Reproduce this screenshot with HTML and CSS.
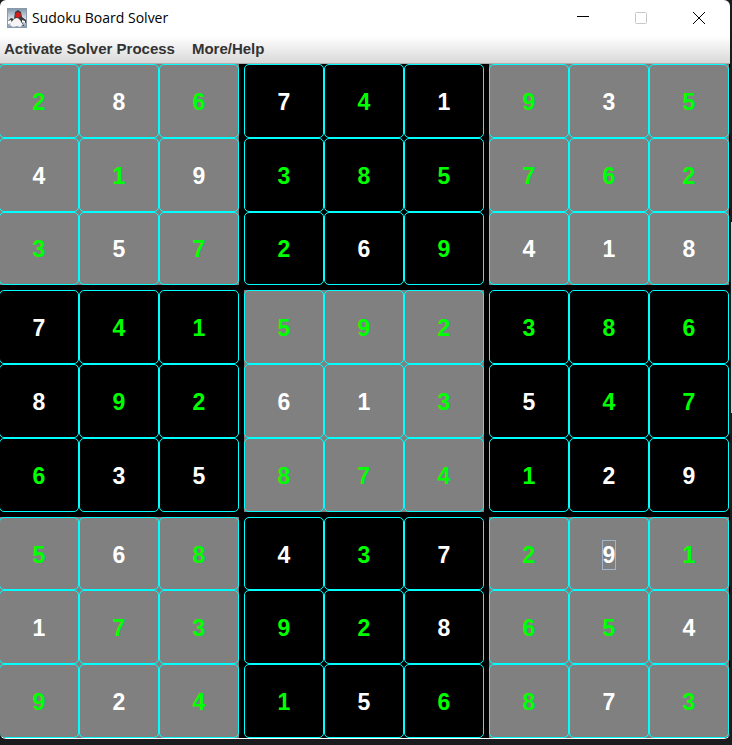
FILE: index.html
```html
<!DOCTYPE html>
<html lang="en">
<head>
<meta charset="utf-8">
<title>Sudoku Board Solver</title>
<link rel="stylesheet" href="styles.css">
</head>
<body>
<main class="window">
  <header class="titlebar">
    <svg class="app-icon" viewBox="0 0 20 20" aria-hidden="true">
      <defs><linearGradient id="sky" x2="0" y2="1"><stop stop-color="#8096ac"/><stop offset=".55" stop-color="#dce4ec"/><stop offset="1" stop-color="#8498ae"/></linearGradient></defs>
      <rect x=".5" y=".5" width="19" height="19" fill="url(#sky)" stroke="#8a9aac"/>
      <path d="M7 11L8 4l3-2 3 2 1 5 4 3v3l-4-1 2 4H5l1-4-5 1v-2l3-3z" fill="#3a3a3c"/>
      <path d="M6 12q4-4 7 0l3 5-3 2-3-1-4 1-3-2z" fill="#f4f4f4"/>
      <path d="M1 13l3-1 1 3-4 1zM15 12l3 1v2l-3-1z" fill="#fff"/>
      <circle cx="11" cy="7" r="2.800" fill="#dc1c1c"/>
    </svg>
    <h1 class="title">Sudoku Board Solver</h1>
    <div class="controls">
      <button class="control" aria-label="Minimize"><svg viewBox="0 0 12 12"><path d="M0 4.500H12"/></svg></button>
      <button class="control" aria-label="Maximize" disabled><svg viewBox="0 0 12 12"><rect x=".5" y=".5" width="11" height="11" rx="1"/></svg></button>
      <button class="control" aria-label="Close"><svg viewBox="0 0 12 12"><path d="M0 0L12 12M12 0L0 12"/></svg></button>
    </div>
  </header>
  <nav class="menubar">
    <button class="menu">Activate Solver Process</button>
    <button class="menu">More/Help</button>
  </nav>
  <section class="board" id="board" aria-label="Sudoku board"></section>
</main>
<script src="board.js"></script>
</body>
</html>
```
FILE: styles.css
```css
* { box-sizing: border-box; }
body {
  margin: 0;
  background:
    linear-gradient(#d0d0d2, #d0d0d2) right 222px / 1px 191px no-repeat,
    #1a1b1d;
  font-family: "Liberation Sans", Arial, sans-serif;
}
.window {
  display: flex;
  flex-direction: column;
  height: calc(100vh - 6px);
  margin-right: 2px;
  margin-bottom: 6px;
  overflow: hidden;
  background: #000;
  border-bottom: 1px solid #fff;
  border-radius: 6px;
}
.titlebar {
  display: flex;
  align-items: center;
  flex: 0 0 36px;
  padding: 0 2px 0 7px;
  background: #fff;
}
.app-icon { width: 20px; height: 20px; }
.title {
  flex: 1;
  margin: 0 0 0 5px;
  font: 14px/20px "Open Sans", "Noto Sans", sans-serif;
  color: #000;
}
.controls { display: flex; }
.control {
  display: grid;
  place-items: center;
  width: 58px;
  height: 34px;
  padding: 0;
  border: 0;
  background: none;
}
.control svg {
  width: 12px;
  height: 12px;
  overflow: visible;
  fill: none;
  stroke: #000;
}
.control:disabled svg { stroke: #c8c8c8; }
.menubar {
  display: flex;
  flex: 0 0 28px;
  gap: 17px;
  padding: 0 4px 2px;
  background: linear-gradient(#fff, #dadada 26px, #eee 26px, #999);
}
.menu {
  padding: 0;
  border: 0;
  background: none;
  color: #333;
  font: bold 15px/26px "Liberation Sans", Arial, sans-serif;
}
.board {
  display: grid;
  flex: 1;
  grid-template-columns: repeat(3, 1fr);
  grid-template-rows: repeat(3, 1fr);
  gap: 5px;
  margin: 0 1px 0 -1px;
}
.block {
  display: grid;
  grid-template-columns: repeat(3, 1fr);
  grid-template-rows: repeat(3, 1fr);
  background: #000;
}
.block.shaded { background: #808080; }
.cell {
  display: grid;
  place-items: center;
  min-width: 0;
  min-height: 0;
  padding: 2px 0 0;
  border: 1px solid #0ff;
  border-radius: 5px;
  background: none;
  color: #fff;
  font: bold 23px/28px "Liberation Sans", Arial, sans-serif;
}
.cell.solved { color: #0f0; }
.cell.focused span { outline: 1px solid #9fb4cf; }
```
FILE: board.js
```js
// An asterisk marks a digit filled in by the solver.
const rows = [
  "2* 8 6* 7 4* 1 9* 3 5*",
  "4 1* 9 3* 8* 5* 7* 6* 2*",
  "3* 5 7* 2* 6 9* 4 1 8",
  "7 4* 1* 5* 9* 2* 3* 8* 6*",
  "8 9* 2* 6 1 3* 5 4* 7*",
  "6* 3 5 8* 7* 4* 1* 2 9",
  "5* 6 8* 4 3* 7 2* 9 1*",
  "1 7* 3* 9* 2* 8 6* 5* 4",
  "9* 2 4* 1* 5 6* 8* 7 3*"
].map(row => row.split(" "));
const board = document.getElementById("board");
for (let b = 0; b < 9; b++) {
  const block = document.createElement("div");
  block.className = b % 2 ? "block" : "block shaded";
  for (let i = 0; i < 9; i++) {
    const r = Math.floor(b / 3) * 3 + Math.floor(i / 3);
    const c = (b % 3) * 3 + i % 3;
    const cell = document.createElement("button");
    const digit = document.createElement("span");
    digit.textContent = rows[r][c][0];
    cell.className = "cell";
    cell.classList.toggle("solved", rows[r][c].endsWith("*"));
    cell.classList.toggle("focused", r === 6 && c === 7);
    cell.append(digit);
    block.append(cell);
  }
  board.append(block);
}
```
